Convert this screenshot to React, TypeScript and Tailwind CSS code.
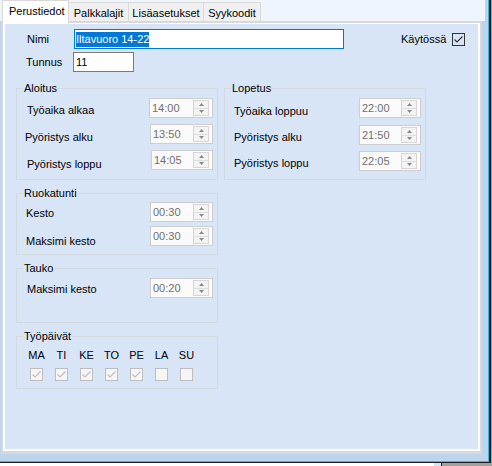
import React from 'react'

function Arrow({ up }: { up?: boolean }) {
  return (
    <svg width="5" height="3" viewBox="0 0 5 3" className="block">
      <path d={up ? 'M0 3 L2.5 0 L5 3 Z' : 'M0 0 L2.5 3 L5 0 Z'} fill="#8a8a8a" />
    </svg>
  )
}

function Spin({ v, w }: { v: string; w: string }) {
  return (
    <div className={'h-[20px] border border-[#cdcdcd] bg-[#fafafa] flex items-center pl-[2px] pr-[3px] ' + w}>
      <span className="flex-1 text-[#707070] leading-[12px]">{v}</span>
      <div className="w-[16px] h-[16px] border border-[#d6d6d6] bg-[#f3f3f3] flex flex-col">
        <div className="flex-1 flex items-center justify-center border-b border-[#dedede]"><Arrow up /></div>
        <div className="flex-1 flex items-center justify-center"><Arrow /></div>
      </div>
    </div>
  )
}

function Row({ label, v, w, lt, mt }: { label: string; v: string; w: string; lt: string; mt?: string }) {
  return (
    <div className={'flex justify-between items-start ' + (mt || '')}>
      <span className={'leading-[12px] ' + lt}>{label}</span>
      <Spin v={v} w={w} />
    </div>
  )
}

function Group({ title, className, children }: { title: string; className: string; children: React.ReactNode }) {
  return (
    <fieldset className={'border border-[#d3d9e0] min-w-0 ' + className}>
      <legend className="ml-[6px] px-[1px] leading-[12px]">{title}</legend>
      {children}
    </fieldset>
  )
}

function Box({ checked, dark }: { checked?: boolean; dark?: boolean }) {
  return (
    <div className={'w-[13px] h-[13px] border flex items-center justify-center ' + (dark ? 'border-[#333333]' : 'border-[#bdbdbd] bg-[#f6f6f6]')}>
      {checked && (
        <svg width="11" height="11" viewBox="0 0 11 11">
          <polyline points="1.5,5.5 4,8 9.5,2.5" fill="none" stroke={dark ? '#333333' : '#bdbdbd'} strokeWidth="1.1" />
        </svg>
      )}
    </div>
  )
}

const DAYS = [
  { k: 'MA', on: true }, { k: 'TI', on: true }, { k: 'KE', on: true }, { k: 'TO', on: true },
  { k: 'PE', on: true }, { k: 'LA', on: false }, { k: 'SU', on: false },
]

export default function App() {
  return (
    <div className="w-[492px] h-[466px] bg-white flex flex-col font-['Liberation_Sans',Arial,sans-serif] text-[11px] text-black overflow-hidden">
      <div className="flex h-[463px]">
        <div className="w-[491px] h-[463px] border-r-2 border-b border-[#1e1e1e]">
          <div className="w-full h-full bg-[#bcd4ec] border-r border-b border-[#3cb6e6]">
            {/* tabs */}
            <div className="h-[21px] w-[485px] bg-[#eef5fc] flex items-end">
              <div className="ml-[2px] w-[67px] h-[24px] -mb-[3px] relative z-10 bg-white border-t border-x border-[#d9d9d9] pt-[4px] pl-[6px] leading-[12px]">Perustiedot</div>
              <div className="w-[60px] h-[19px] border-t border-r border-[#d9d9d9] bg-[#f0f0f0] text-center pt-[4px] leading-[12px]">Palkkalajit</div>
              <div className="w-[75px] h-[19px] border-t border-r border-[#d9d9d9] bg-[#f0f0f0] text-center pt-[4px] leading-[12px]">Lisäasetukset</div>
              <div className="w-[57px] h-[19px] border-t border-r border-[#d9d9d9] bg-[#f0f0f0] text-center pt-[4px] leading-[12px]">Syykoodit</div>
            </div>

            {/* page */}
            <div className="ml-[1px] w-[481px] h-[433px] border-2 border-b-[3px] border-[#d9d9d9]">
              <div className="h-full border-2 border-t border-white bg-[#d8e5f7] pl-[11px] pt-[5px]">
                <div className="flex items-center h-[20px]">
                  <span className="ml-[11px] w-[47px] leading-[12px]">Nimi</span>
                  <div className="w-[270px] h-[20px] border border-[#0078d7] bg-white flex items-center pl-[1px]">
                    <span className="bg-[#0078d7] text-white h-[15px] leading-[15px]">Iltavuoro 14-22</span>
                  </div>
                  <span className="ml-[57px] w-[51px] leading-[12px]">Käytössä</span>
                  <Box checked dark />
                </div>
                <div className="flex items-center h-[20px] mt-[3px]">
                  <span className="ml-[10px] w-[47px] leading-[12px]">Tunnus</span>
                  <div className="w-[61px] h-[20px] border border-[#7a7a7a] bg-white flex items-center pl-[2px] leading-[12px]">11</div>
                </div>

                <div className="flex items-start gap-[6px] mt-[10px]">
                  <div className="flex flex-col gap-[7px]">
                    <Group title="Aloitus" className="w-[202px]">
                      <div className="pl-[10px] pr-[4px] pt-[4px] pb-[9px]">
                        <Row label="Työaika alkaa" v="14:00" w="w-[64px]" lt="mt-[6px]" />
                        <Row label="Pyöristys alku" v="13:50" w="w-[63px]" lt="mt-[7px] -ml-[2px]" mt="mt-[6px]" />
                        <Row label="Pyöristys loppu" v="14:05" w="w-[62px]" lt="mt-[8px]" mt="mt-[6px]" />
                      </div>
                    </Group>
                    <Group title="Ruokatunti" className="w-[202px]">
                      <div className="pl-[9px] pr-[4px] pt-[3px] pb-[7px]">
                        <Row label="Kesto" v="00:30" w="w-[63px]" lt="mt-[5px]" />
                        <Row label="Maksimi kesto" v="00:30" w="w-[63px]" lt="mt-[9px]" mt="mt-[4px]" />
                      </div>
                    </Group>
                    <Group title="Tauko" className="w-[202px]">
                      <div className="pl-[10px] pr-[4px] pt-[4px] pb-[24px]">
                        <Row label="Maksimi kesto" v="00:20" w="w-[63px]" lt="mt-[5px]" />
                      </div>
                    </Group>
                    <Group title="Työpäivät" className="w-[202px]">
                      <div className="pl-[7px] pt-[7px] pb-[7px]">
                        <div className="grid grid-cols-[repeat(7,25px)]">
                          {DAYS.map(d => (
                            <span key={d.k} className="text-center leading-[12px]">{d.k}</span>
                          ))}
                        </div>
                        <div className="grid grid-cols-[repeat(7,25px)] mt-[7px]">
                          {DAYS.map(d => (
                            <div key={d.k} className="flex justify-center"><Box checked={d.on} /></div>
                          ))}
                        </div>
                      </div>
                    </Group>
                  </div>
                  <Group title="Lopetus" className="w-[202px]">
                    <div className="pl-[9px] pr-[4px] pt-[4px] pb-[8px]">
                      <Row label="Työaika loppuu" v="22:00" w="w-[62px]" lt="mt-[7px]" />
                      <Row label="Pyöristys alku" v="21:50" w="w-[62px]" lt="mt-[6px]" mt="mt-[7px]" />
                      <Row label="Pyöristys loppu" v="22:05" w="w-[62px]" lt="mt-[6px]" mt="mt-[6px]" />
                    </div>
                  </Group>
                </div>
              </div>
            </div>
          </div>
        </div>
        <div className="flex-1 bg-[#a0a0a0]" />
      </div>
      <div className="flex h-[3px]">
        <div className="w-[434px] bg-white" />
        <div className="w-[7px] bg-[#d8e4f2]" />
        <div className="flex-1 bg-[#a0a0a0] border-l border-[#1e1e1e]" />
      </div>
    </div>
  )
}
